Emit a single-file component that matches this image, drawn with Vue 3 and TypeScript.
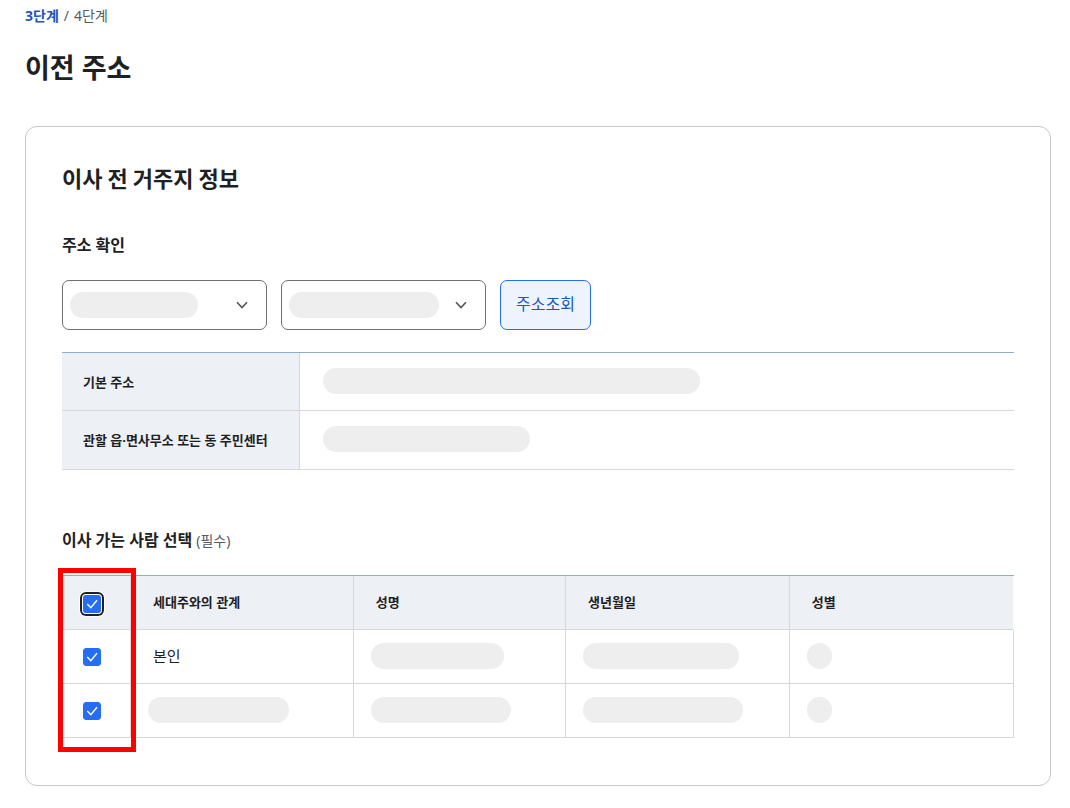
<script setup lang="ts">
import { computed, ref } from 'vue'

interface Person {
  relation: string
  selected: boolean
  masks: { relation: number; name: number; birth: number; gender: number }
}

const addressRows = [
  { label: '기본 주소', mask: 377 },
  { label: '관할 읍·면사무소 또는 동 주민센터', mask: 207 },
]

const regionSelects = [
  { id: 'sido', mask: 128 },
  { id: 'sigungu', mask: 150 },
]

const people = ref<Person[]>([
  { relation: '본인', selected: true, masks: { relation: 0, name: 133, birth: 156, gender: 25 } },
  { relation: '', selected: true, masks: { relation: 141, name: 140, birth: 160, gender: 25 } },
])

const allSelected = computed({
  get: () => people.value.every((p) => p.selected),
  set: (value: boolean) => people.value.forEach((p) => (p.selected = value)),
})
</script>

<template>
  <main class="page">
    <p class="steps"><strong>3단계</strong><span>/</span><span>4단계</span></p>
    <h1 class="page-title">이전 주소</h1>

    <section class="card">
      <h2 class="card-title">이사 전 거주지 정보</h2>

      <h3 id="address-title" class="sub-title">주소 확인</h3>
      <div class="search">
        <div v-for="item in regionSelects" :key="item.id" class="select">
          <select :id="item.id" aria-labelledby="address-title">
            <option value=""></option>
          </select>
          <span class="mask select-mask" :style="{ width: item.mask + 'px' }"></span>
          <svg class="chevron" viewBox="0 0 16 16" aria-hidden="true">
            <path d="M3 5.3 8 10.5 13 5.3" />
          </svg>
        </div>
        <button type="button" class="lookup">주소조회</button>
      </div>

      <table class="info">
        <tbody>
          <tr v-for="row in addressRows" :key="row.label">
            <th scope="row">{{ row.label }}</th>
            <td><span class="mask" :style="{ width: row.mask + 'px' }"></span></td>
          </tr>
        </tbody>
      </table>

      <h3 id="people-title" class="sub-title people-title">이사 가는 사람 선택<span class="required">(필수)</span></h3>
      <div class="people-wrap">
        <table class="people" aria-labelledby="people-title">
          <colgroup>
            <col class="col-check" />
            <col class="col-relation" />
            <col class="col-name" />
            <col class="col-birth" />
            <col />
          </colgroup>
          <thead>
            <tr>
              <th scope="col">
                <label class="check check-focus">
                  <input v-model="allSelected" type="checkbox" aria-labelledby="people-title" />
                  <svg viewBox="0 0 18 18" aria-hidden="true"><path d="M4.3 9 7.8 12.7 14 5.3" /></svg>
                </label>
              </th>
              <th scope="col">세대주와의 관계</th>
              <th scope="col">성명</th>
              <th scope="col">생년월일</th>
              <th scope="col">성별</th>
            </tr>
          </thead>
          <tbody>
            <tr v-for="(person, i) in people" :key="i">
              <td>
                <label class="check">
                  <input v-model="person.selected" type="checkbox" :aria-labelledby="'relation-' + i" />
                  <svg viewBox="0 0 18 18" aria-hidden="true"><path d="M4.3 9 7.8 12.7 14 5.3" /></svg>
                </label>
              </td>
              <td v-if="person.relation" :id="'relation-' + i" class="text">{{ person.relation }}</td>
              <td v-else :id="'relation-' + i">
                <span class="mask" :style="{ width: person.masks.relation + 'px' }"></span>
              </td>
              <td><span class="mask" :style="{ width: person.masks.name + 'px' }"></span></td>
              <td><span class="mask" :style="{ width: person.masks.birth + 'px' }"></span></td>
              <td><span class="mask" :style="{ width: person.masks.gender + 'px' }"></span></td>
            </tr>
          </tbody>
        </table>
        <div class="highlight"></div>
      </div>
    </section>
  </main>
</template>

<style>
body {
  margin: 0;
  background: #fff;
}
</style>

<style scoped>
.page,
.page * {
  box-sizing: border-box;
}

.page {
  padding: 5px 19px 22px 25px;
  color: #1e2124;
  font-family: "Noto Sans", "Noto Sans CJK KR", sans-serif;
  font-size: 15px;
  line-height: 22px;
}

h1,
h2,
h3,
p {
  margin: 0;
}

.steps {
  display: flex;
  gap: 5px;
  color: #555b62;
  font-size: 14px;
}

.steps strong {
  color: #1d56bc;
  font-weight: 700;
}

.page-title {
  margin-top: 20px;
  font-size: 27px;
  line-height: 42px;
}

.card {
  margin-top: 37px;
  padding: 34px 36px 47px;
  border: 1px solid #c6c6c6;
  border-radius: 12px;
}

.card-title {
  font-family: "Noto Sans CJK KR", sans-serif;
  font-size: 22px;
  line-height: 32px;
}

.sub-title {
  margin-top: 40px;
  font-size: 16px;
  line-height: 24px;
}

.people-title {
  margin-top: 58px;
}

.required {
  margin-left: 4px;
  color: #555b62;
  font-size: 14px;
  font-weight: 400;
  line-height: 16px;
}

.search {
  display: flex;
  flex-wrap: wrap;
  gap: 14px;
  margin-top: 23px;
}

.select {
  position: relative;
  width: 205px;
}

.select select {
  display: block;
  width: 100%;
  height: 50px;
  padding: 0 40px 0 16px;
  border: 1px solid #6d7070;
  border-radius: 7px;
  background: #fff;
  color: inherit;
  font: inherit;
  appearance: none;
}

.mask {
  display: block;
  height: 26px;
  border-radius: 13px;
  background: #eee;
}

.select-mask {
  position: absolute;
  top: 12px;
  left: 8px;
  pointer-events: none;
}

.chevron {
  position: absolute;
  top: 17px;
  right: 17px;
  width: 16px;
  height: 16px;
  fill: none;
  stroke: #50555b;
  stroke-width: 1.6;
  pointer-events: none;
}

.lookup {
  min-width: 91px;
  height: 50px;
  padding: 0 14px 3px;
  border: 1px solid #256ef4;
  border-radius: 7px;
  background: #eef4ff;
  color: #1d56bc;
  font: inherit;
  font-size: 16px;
}

table {
  width: 100%;
  border-collapse: separate;
  border-spacing: 0;
  border-top: 1px solid #8eaccb;
  table-layout: fixed;
}

th {
  background: #edf1f5;
  font-size: 13px;
  line-height: 20px;
  text-align: left;
}

th,
td {
  border-right: 1px solid #d6d7d9;
  border-bottom: 1px solid #d6d7d9;
}

.info {
  margin-top: 22px;
}

.info th {
  width: 25%;
  padding: 0 21px;
}

.info td {
  height: 58px;
  padding: 0 22px 2px 23px;
  border-right: 0;
}

.info tr:last-child td {
  height: 59px;
}

.people-wrap {
  position: relative;
  margin-top: 23px;
}

.col-check {
  width: 69px;
}

.col-relation {
  width: 23.4%;
}

.col-name {
  width: 22.3%;
}

.col-birth {
  width: 23.5%;
}

.people th,
.people td {
  height: 54px;
  padding: 0 17px 2px;
}

.people th,
.people .text {
  padding-left: 22px;
}

.people th:first-child {
  padding: 2px 17px 0 21px;
}

.people td:first-child {
  padding: 0 17px 0 21px;
}

.people th:last-child {
  border-right-color: #fff;
  background-clip: padding-box;
}

.check {
  display: grid;
  width: 18px;
  height: 18px;
  border-radius: 3px;
}

.check-focus {
  box-shadow: 0 0 0 1px #fff, 0 0 0 3px #1e2124, 0 0 0 4px #fff;
}

.check input,
.check svg {
  grid-area: 1 / 1;
  width: 18px;
  height: 18px;
  margin: 0;
}

.check input {
  border: 1px solid #8a949e;
  border-radius: 3px;
  background: #fff;
  appearance: none;
}

.check input:checked {
  border-color: #256ef4;
  background: #256ef4;
}

.check svg {
  fill: none;
  stroke: #fff;
  stroke-width: 1.4;
  pointer-events: none;
}

.highlight {
  position: absolute;
  top: -7px;
  bottom: -14px;
  left: -4px;
  width: 78px;
  border: 5px solid #f00;
  pointer-events: none;
}
</style>
